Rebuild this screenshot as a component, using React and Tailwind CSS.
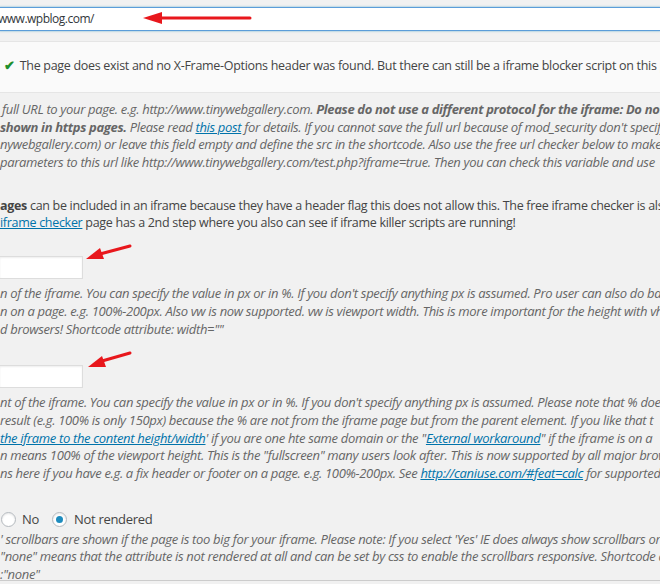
import React from "react";

const italic = "italic text-[#666] text-[13px] tracking-[-0.33px] leading-[17.7px] whitespace-nowrap h-[17.7px]";
const normal = "text-[#444] text-[12.5px] tracking-[-0.3px] leading-[17.7px] whitespace-nowrap h-[17.7px]";
const link = "text-[#0073aa] underline";

function Radio({ checked }) {
  return (
    <span className="inline-flex items-center justify-center w-[15px] h-[15px] rounded-full border border-[#b4b9be] bg-white shadow-[inset_0_1px_2px_rgba(0,0,0,0.1)]">
      {checked && <span className="w-[7px] h-[7px] rounded-full bg-[#1e8cbe]" />}
    </span>
  );
}

export default function App() {
  return (
    <div
      className="relative w-[660px] h-[584px] overflow-hidden bg-[#f1f1f1]"
      style={{ fontFamily: '"Open Sans", "Noto Sans", sans-serif' }}
    >
      <div className="pt-[7px]">
        <div className="-ml-px -mr-px h-[24px] border border-[#5b9dd9] bg-white shadow-[0_0_2px_rgba(30,140,190,0.6)] flex items-center overflow-hidden text-[12px] tracking-[-0.5px] text-[#32373c] whitespace-nowrap">
          <span className="-ml-[2px]">www.wpblog.com/</span>
        </div>
      </div>

      <div className="mt-[10px] -ml-px -mr-px h-[52px] border border-[#e5e5e5] bg-[#fafafa] flex items-center pl-[4px] pb-[2px] text-[12.5px] tracking-[-0.3px] text-[#444] whitespace-nowrap">
        <span className="text-[#1f8f2e] text-[13px] mr-[5px] font-bold">✔</span>
        The page does exist and no X-Frame-Options header was found. But there can still be a iframe blocker script on this page.
      </div>

      <div className="mt-[8px]">
        <div className={italic + " pl-[2px]"}>
          full URL to your page. e.g. http://www.tinywebgallery.com. <b>Please do not use a different protocol for the iframe: Do not</b>
        </div>
        <div className={italic}>
          <b>shown in https pages.</b> Please read <span className={link}>this post</span> for details. If you cannot save the full url because of mod_security don't specify
        </div>
        <div className={italic}>
          nywebgallery.com) or leave this field empty and define the src in the shortcode. Also use the free url checker below to make
        </div>
        <div className={italic}>
          parameters to this url like http://www.tinywebgallery.com/test.php?iframe=true. Then you can check this variable and use
        </div>
      </div>

      <div className="mt-[25px]">
        <div className={normal}>
          <b>ages</b> can be included in an iframe because they have a header flag this does not allow this. The free iframe checker is also
        </div>
        <div className={normal}>
          <span className={link}>iframe checker</span> page has a 2nd step where you also can see if iframe killer scripts are running!
        </div>
      </div>

      <div className="mt-[24px] -ml-px w-[84px] h-[23px] border border-[#ddd] bg-white shadow-[inset_0_1px_2px_rgba(0,0,0,0.07)]" />

      <div className="mt-[6px]">
        <div className={italic}>
          n of the iframe. You can specify the value in px or in %. If you don't specify anything px is assumed. Pro user can also do ba
        </div>
        <div className={italic}>
          n on a page. e.g. 100%-200px. Also vw is now supported. vw is viewport width. This is more important for the height with vh
        </div>
        <div className={italic}>
          d browsers! Shortcode attribute: width=""
        </div>
      </div>

      <div className="mt-[27px] -ml-px w-[84px] h-[23px] border border-[#ddd] bg-white shadow-[inset_0_1px_2px_rgba(0,0,0,0.07)]" />

      <div className="mt-[6px]">
        <div className={italic}>
          nt of the iframe. You can specify the value in px or in %. If you don't specify anything px is assumed. Please note that % does
        </div>
        <div className={italic}>
          result (e.g. 100% is only 150px) because the % are not from the iframe page but from the parent element. If you like that t
        </div>
        <div className={italic}>
          <span className={link}> the iframe to the content height/width</span>' if you are one hte same domain or the "<span className={link}>External workaround</span>" if the iframe is on a
        </div>
        <div className={italic}>
          n means 100% of the viewport height. This is the "fullscreen" many users look after. This is now supported by all major brow
        </div>
        <div className={italic}>
          ns here if you have e.g. a fix header or footer on a page. e.g. 100%-200px. See <span className={link}>http://caniuse.com/#feat=calc</span> for supported
        </div>
      </div>

      <div className="mt-[27px] h-[20px] flex items-center pl-[1px] text-[13px] tracking-[-0.3px] text-[#444] whitespace-nowrap">
        <Radio />
        <span className="ml-[6px]">No</span>
        <span className="ml-[13px] inline-flex items-center">
          <Radio checked />
        </span>
        <span className="ml-[7px]">Not rendered</span>
      </div>

      <div className="mt-[1px]">
        <div className={italic}>
          ' scrollbars are shown if the page is too big for your iframe. Please note: If you select 'Yes' IE does always show scrollbars or
        </div>
        <div className={italic}>
          "none" means that the attribute is not rendered at all and can be set by css to enable the scrollbars responsive. Shortcode a
        </div>
        <div className={italic}>
          :"none"
        </div>
      </div>

      <div className="absolute left-0 right-0 top-[580px] h-[4px] border-t border-[#ccc] bg-[#f1f1f1]" />

      <svg className="absolute left-0 top-0 pointer-events-none" width="660" height="584">
        <g fill="#e8171c" stroke="#e8171c">
          <line x1="158" y1="18" x2="250" y2="18" strokeWidth="3" strokeLinecap="round" />
          <polygon points="143,18 162,12 162,24" stroke="none" />
          <line x1="100" y1="254" x2="130" y2="246" strokeWidth="3" strokeLinecap="round" />
          <polygon points="86,259 100,248 104,259" stroke="none" />
          <line x1="102" y1="361" x2="130" y2="353" strokeWidth="3" strokeLinecap="round" />
          <polygon points="88,367 102,356 106,367" stroke="none" />
        </g>
      </svg>
    </div>
  );
}
